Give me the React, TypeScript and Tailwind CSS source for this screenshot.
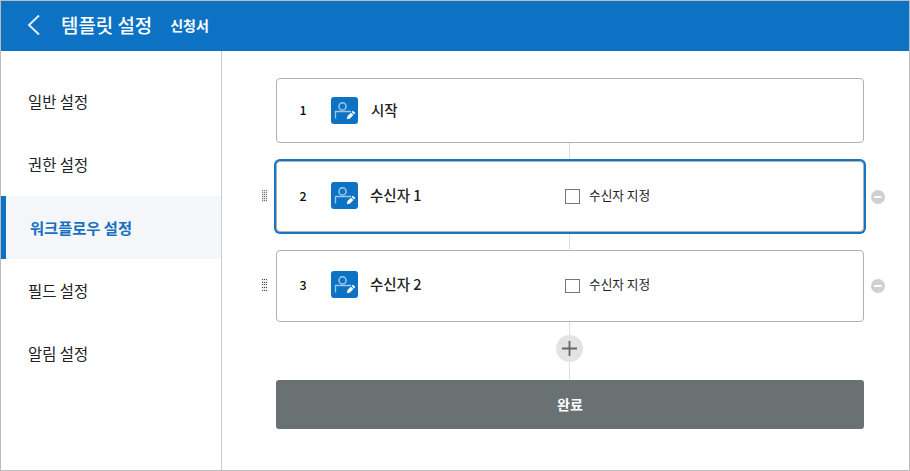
import React from "react";

const menu = ["일반 설정", "권한 설정", "워크플로우 설정", "필드 설정", "알림 설정"];

function SignerIcon() {
  return (
    <svg width="27" height="27" viewBox="0 0 27 27" fill="none" className="shrink-0">
      <rect width="27" height="27" rx="3" fill="#0e72c4" />
      <ellipse cx="11.5" cy="9.4" rx="3.5" ry="3.6" stroke="#9cc7ea" strokeWidth="1.5" />
      <path d="M4.5 21.5v-7H20" stroke="#9cc7ea" strokeWidth="1.3" />
      <path d="M15.8 22.3l.7-3.4 3.4-3.2 2.5 2.4-3.4 3.5z" fill="#fff" />
      <path d="M20.6 15l1.3-1.2 2.4 2.3-1.3 1.3z" fill="#fff" />
    </svg>
  );
}

function DragHandle({ dark }: { dark: boolean }) {
  const rows = dark ? [0, 3, 5, 8, 11] : [0, 2, 4, 6, 8, 10];
  return (
    <svg
      width="5"
      height="12"
      viewBox="0 0 5 12"
      className="ml-px"
      shapeRendering="crispEdges"
      fill={dark ? "#444" : "#777"}
    >
      <rect width="5" height="12" fill={dark ? "#f0f0f0" : "#e4e4e4"} />
      {rows.map((y) =>
        [0, 2, 4].map((x) => <rect key={`${x}-${y}`} x={x} y={y} width="1" height="1" />)
      )}
    </svg>
  );
}

function RemoveIcon() {
  return (
    <svg width="14" height="14" viewBox="0 0 14 14">
      <circle cx="7" cy="7" r="7" fill="#d0d0d0" />
      <rect x="3" y="6" width="7.5" height="2" fill="#fff" />
    </svg>
  );
}

function Connector({ className }: { className: string }) {
  return <div className={`w-px bg-[#dedede] ${className}`} />;
}

function Recipient({ step, name, active = false }: { step: number; name: string; active?: boolean }) {
  return (
    <div className="flex w-[624px] items-center">
      <div className="w-[15px] pb-[2px]">
        <DragHandle dark={!active} />
      </div>
      <div
        className={`flex w-[588px] items-center rounded-[4px] border border-[#b1b1b1] bg-white ${
          active ? "h-[71px] ring-2 ring-[#1874c4]" : "h-[72px]"
        }`}
      >
        <span className="w-[54px] pb-[1px] pl-[22.5px] text-[12.5px] font-medium text-[#111]">{step}</span>
        <div className={active ? "pb-[2px]" : "pb-[3px]"}><SignerIcon /></div>
        <span className="w-[207px] pb-[3px] pl-[12px] text-[14.5px] font-medium text-[#222]">{name}</span>
        <span className={`w-[15px] border border-[#777] ${active ? "h-[15px]" : "h-[14px]"}`} />
        <span className={`pl-[9px] text-[12.7px] text-[#222] ${active ? "pb-[2px]" : "pb-[3px]"}`}>수신자 지정</span>
      </div>
      <div className="pl-[7px]">
        <RemoveIcon />
      </div>
    </div>
  );
}

export default function App() {
  return (
    <div className="flex h-[471px] w-[910px] flex-col border border-[#bbb] bg-white font-['Noto_Sans_CJK_KR',sans-serif] leading-none">
      <header className="flex h-[50px] shrink-0 items-center bg-[#0e72c4] text-white">
        <svg width="13" height="22" viewBox="0 0 13 22" fill="none" className="mb-[2px] ml-[26px]">
          <path d="M12 1.5L2 11l10 9.5" stroke="#e4f0fa" strokeWidth="1.9" />
        </svg>
        <h1 className="mb-[2px] ml-[21px] text-[18.9px] font-medium">템플릿 설정</h1>
        <span className="mb-[2px] ml-[18px] text-[14px] font-bold">신청서</span>
      </header>
      <div className="flex min-h-0 flex-1">
        <nav className="w-[221px] shrink-0 border-r border-[#ccc] pt-[19px]">
          {menu.map((item, i) => (
            <div
              key={item}
              className={`flex h-[63px] items-center ${
                i === 2
                  ? "border-l-[5px] border-[#0e72c4] bg-[#f5f6f9] pl-[24px] text-[15.3px] font-bold text-[#1570c4]"
                  : "pl-[27px] text-[15.4px] text-[#222]"
              }`}
            >
              {item}
            </div>
          ))}
        </nav>
        <main className="flex flex-1 flex-col items-start pl-[39px] pt-[27px]">
          <div className="ml-[15px] flex h-[65px] w-[588px] items-center rounded-[4px] border border-[#b1b1b1]">
            <span className="w-[54px] pb-[1px] pl-[22.5px] text-[12.5px] font-medium text-[#111]">1</span>
            <SignerIcon />
            <span className="pl-[13px] text-[14.5px] font-medium text-[#222]">시작</span>
          </div>
          <Connector className="ml-[308px] h-[18px]" />
          <Recipient step={2} name="수신자 1" active />
          <Connector className="ml-[308px] mt-[2px] h-[16px]" />
          <Recipient step={3} name="수신자 2" />
          <Connector className="ml-[308px] h-[13px]" />
          <svg width="27" height="27" viewBox="0 0 27 27" className="ml-[295px] shrink-0">
            <circle cx="13.5" cy="13.5" r="13.5" fill="#e3e3e3" />
            <path d="M13.5 6v15M6 13.5h15" stroke="#666" strokeWidth="1.8" />
          </svg>
          <Connector className="ml-[308px] h-[18px]" />
          <button className="ml-[15px] h-[49px] w-[588px] rounded-[3px] bg-[#697173] pb-[2px] text-[14px] font-bold text-white">
            완료
          </button>
        </main>
      </div>
    </div>
  );
}
